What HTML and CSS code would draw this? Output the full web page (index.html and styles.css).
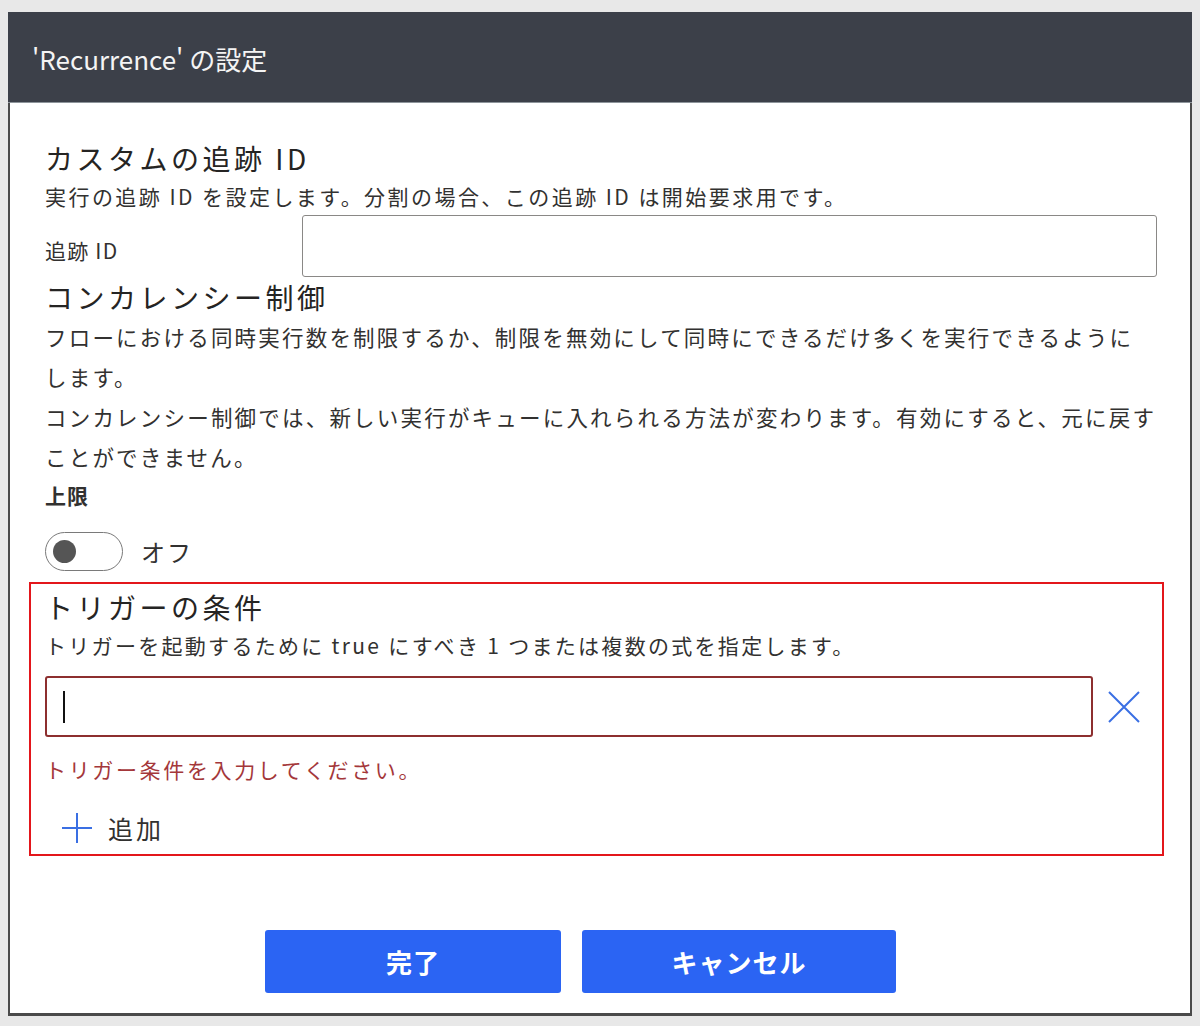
FILE: index.html
```html
<!DOCTYPE html>
<html lang="ja">
<head>
<meta charset="utf-8">
<title>'Recurrence' の設定</title>
<link rel="stylesheet" href="styles.css">
</head>
<body>
<div class="dialog">
  <div class="header">'Recurrence' の設定</div>
  <div class="content">
    <h2 class="heading">カスタムの追跡 ID</h2>
    <p class="desc">実行の追跡 ID を設定します。分割の場合、この追跡 ID は開始要求用です。</p>
    <div class="field-row">
      <label class="field-label">追跡 ID</label>
      <div class="text-input"></div>
    </div>

    <h2 class="heading">コンカレンシー制御</h2>
    <p class="para">フローにおける同時実行数を制限するか、制限を無効にして同時にできるだけ多くを実行できるように<span class="nowrap">します。</span></p>
    <p class="para">コンカレンシー制御では、新しい実行がキューに入れられる方法が変わります。有効にすると、元に戻すことができません。</p>
    <div class="sub-label">上限</div>
    <div class="toggle-row">
      <span class="toggle"><span class="knob"></span></span>
      <span class="toggle-text">オフ</span>
    </div>

    <div class="highlight">
      <h2 class="heading">トリガーの条件</h2>
      <p class="desc desc-trigger">トリガーを起動するために true にすべき 1 つまたは複数の式を指定します。</p>
      <div class="cond-row">
        <div class="cond-input"><span class="caret"></span></div>
        <svg class="close-icon" width="32" height="32" viewBox="0 0 32 32">
          <path d="M1 1 L31 31 M31 1 L1 31" stroke="#3a6fe3" stroke-width="2" fill="none"/>
        </svg>
      </div>
      <div class="error">トリガー条件を入力してください。</div>
      <div class="add-row">
        <svg class="plus-icon" width="32" height="32" viewBox="0 0 32 32">
          <path d="M16 1 V31 M1 16 H31" stroke="#3a6fe3" stroke-width="2" fill="none"/>
        </svg>
        <span class="add-text">追加</span>
      </div>
    </div>

    <div class="buttons">
      <button class="btn btn-done">完了</button>
      <button class="btn btn-cancel">キャンセル</button>
    </div>
  </div>
</div>
</body>
</html>
```

FILE: styles.css
```css
* { box-sizing: border-box; }

html, body {
  margin: 0;
  padding: 0;
}

body {
  background: #e8e8e8;
  font-family: "Noto Sans CJK JP", "Noto Sans", sans-serif;
  color: #323130;
  padding: 12px 8px 10px 8px;
  height: 1026px;
}

.dialog {
  width: 1184px;
  height: 1004px;
  background: #ffffff;
  border-left: 2px solid #4a4a4a;
  border-right: 2px solid #4a4a4a;
  border-bottom: 3px solid #4a4a4a;
  display: flex;
  flex-direction: column;
}

.header {
  height: 91px;
  background: #3c4049;
  border-bottom: 1px solid #8e959b;
  color: #f4f4f4;
  font-size: 26px;
  line-height: 30px;
  padding: 32px 0 0 24px;
  margin: 0 -2px;
}

.content {
  padding: 35px 33px 0 35px;
  flex: 1;
  display: flex;
  flex-direction: column;
}

.heading {
  margin: 0;
  font-size: 28px;
  font-weight: 400;
  letter-spacing: 3.5px;
  line-height: 40px;
  color: #252423;
}

.desc {
  margin: 0;
  font-size: 21px;
  letter-spacing: 2.45px;
  line-height: 36px;
}

.desc-trigger {
  letter-spacing: 2.3px;
}

.field-row {
  display: flex;
  align-items: center;
  margin-top: 1px;
}

.field-label {
  width: 257px;
  font-size: 21px;
  letter-spacing: 1.2px;
  line-height: 36px;
  padding-top: 8px;
}

.text-input {
  flex: 1;
  height: 62px;
  border: 1px solid #8a8886;
  border-radius: 3px;
}

.para {
  margin: 0;
  font-size: 21.5px;
  letter-spacing: 2.2px;
  line-height: 40px;
}

.nowrap {
  white-space: nowrap;
}

.sub-label {
  font-size: 21px;
  font-weight: 700;
  line-height: 36px;
  letter-spacing: 1px;
}

.toggle-row {
  display: flex;
  align-items: center;
  margin-top: 18px;
  height: 40px;
}

.toggle {
  width: 78px;
  height: 39px;
  border: 1.5px solid #7a7a7a;
  border-radius: 20px;
  display: flex;
  align-items: center;
  padding-left: 7px;
}

.knob {
  width: 23px;
  height: 23px;
  border-radius: 50%;
  background: #555555;
}

.toggle-text {
  margin-left: 18px;
  font-size: 24px;
  letter-spacing: 2px;
}

.highlight {
  margin: 11px 0 0 -16px;
  width: 1135px;
  border: 2px solid #e3161b;
  padding: 3px 22px 6px 14px;
}

.cond-row {
  display: flex;
  align-items: center;
  margin-top: 13px;
}

.cond-input {
  flex: 1;
  height: 61px;
  border: 2px solid #8d2f2f;
  border-radius: 3px;
  display: flex;
  align-items: center;
  padding-left: 16px;
}

.caret {
  width: 2px;
  height: 32px;
  background: #111;
}

.close-icon {
  margin-left: 15px;
  display: block;
}

.error {
  margin-top: 14px;
  font-size: 21px;
  letter-spacing: 2.65px;
  line-height: 36px;
  color: #a4373a;
}

.add-row {
  display: flex;
  align-items: center;
  margin-top: 21px;
  height: 40px;
  padding-left: 16px;
}

.plus-icon {
  display: block;
}

.add-text {
  margin-left: 15px;
  font-size: 25px;
  letter-spacing: 3px;
}

.buttons {
  display: flex;
  gap: 21px;
  margin-top: 74px;
  padding-left: 220px;
}

.btn {
  height: 63px;
  border: none;
  border-radius: 3px;
  background: #2b64f3;
  color: #ffffff;
  font-family: "Noto Sans CJK JP", "Noto Sans", sans-serif;
  font-size: 26px;
  font-weight: 700;
  letter-spacing: 1px;
  padding: 0;
}

.btn-done { width: 296px; }
.btn-cancel { width: 314px; }
```
